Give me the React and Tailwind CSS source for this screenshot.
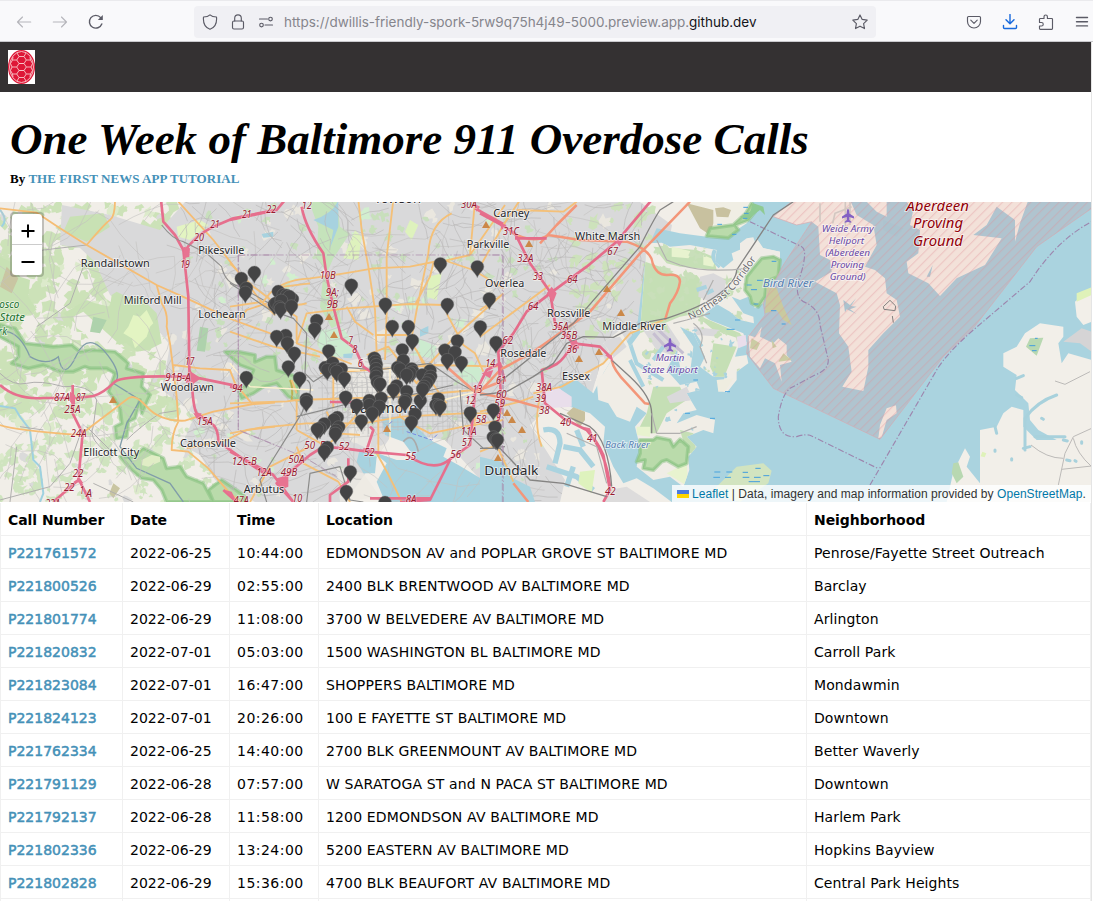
import React from "react";

const calls = [
  ["P221761572", "2022-06-25", "10:44:00", "EDMONDSON AV and POPLAR GROVE ST BALTIMORE MD", "Penrose/Fayette Street Outreach"],
  ["P221800526", "2022-06-29", "02:55:00", "2400 BLK BRENTWOOD AV BALTIMORE MD", "Barclay"],
  ["P221801774", "2022-06-29", "11:08:00", "3700 W BELVEDERE AV BALTIMORE MD", "Arlington"],
  ["P221820832", "2022-07-01", "05:03:00", "1500 WASHINGTON BL BALTIMORE MD", "Carroll Park"],
  ["P221823084", "2022-07-01", "16:47:00", "SHOPPERS BALTIMORE MD", "Mondawmin"],
  ["P221824123", "2022-07-01", "20:26:00", "100 E FAYETTE ST BALTIMORE MD", "Downtown"],
  ["P221762334", "2022-06-25", "14:40:00", "2700 BLK GREENMOUNT AV BALTIMORE MD", "Better Waverly"],
  ["P221791129", "2022-06-28", "07:57:00", "W SARATOGA ST and N PACA ST BALTIMORE MD", "Downtown"],
  ["P221792137", "2022-06-28", "11:58:00", "1200 EDMONDSON AV BALTIMORE MD", "Harlem Park"],
  ["P221802336", "2022-06-29", "13:24:00", "5200 EASTERN AV BALTIMORE MD", "Hopkins Bayview"],
  ["P221802828", "2022-06-29", "15:36:00", "4700 BLK BEAUFORT AV BALTIMORE MD", "Central Park Heights"],
  ["", "", "", "", ""],
];

// The map is drawn in sheets at triple scale; each starts at its own longitude offset.
const Sheet = ({ x, children, ...rest }) => (
  <g transform={`translate(${x} 200) scale(0.33333)`} {...rest}>{children}</g>
);

// Small repeatable generator for street and vegetation texture.
function seeded(seed) {
  let s = seed;
  return () => {
    s = (s * 16807) % 2147483647;
    return s / 2147483647;
  };
}

function scatter(seed, count, x0, y0, w, h, size) {
  const r = seeded(seed);
  let d = "";
  for (let i = 0; i < count; i++) {
    const cx = x0 + r() * w;
    const cy = y0 + r() * h;
    const s = size * (0.4 + r());
    const n = 11;
    for (let k = 0; k < n; k++) {
      const a = (k / n) * Math.PI * 2;
      const q = s * (0.3 + r() * 0.9);
      d += (k ? "L" : "M") + (cx + Math.cos(a) * q).toFixed(1) + "," + (cy + Math.sin(a) * q).toFixed(1);
    }
    d += "Z";
  }
  return d;
}

function streets(seed, count, x0, y0, w, h, len) {
  const r = seeded(seed);
  let d = "";
  for (let i = 0; i < count; i++) {
    let x = x0 + r() * w;
    let y = y0 + r() * h;
    let a = r() * Math.PI * 2;
    d += `M${x.toFixed(1)},${y.toFixed(1)}`;
    for (let k = 0; k < 4; k++) {
      a += (r() - 0.5) * 1.1;
      x += Math.cos(a) * len;
      y += Math.sin(a) * len;
      d += `L${x.toFixed(1)},${y.toFixed(1)}`;
    }
  }
  return d;
}

const grid = (() => {
  let d = "";
  for (let x = 322; x < 475; x += 5) d += `M${x},${372 + (x % 3) * 4}L${x + 1},${428 + (x % 4) * 3}`;
  for (let y = 368; y < 432; y += 5) d += `M${318 + (y % 4) * 6},${y}L${468 - (y % 3) * 5},${y - 2}`;
  return d;
})();

const URBAN = "M185,202 L560,202 L640,202 L672,225 L660,290 L640,330 L600,365 L590,400 L548,408 L530,425 L565,480 L560,502 L500,502 L445,440 L420,436 L395,430 L375,460 L345,502 L255,502 L215,480 L200,455 L182,445 L195,415 L162,390 L170,345 L150,320 L110,295 L95,262 L80,248 L60,245 L62,205 L110,215 L160,230Z M700,275 L728,275 L728,298 L705,298Z";
const EAST_WATER = "M500,150 L530,85 L600,100 L680,110 L760,90 L800,0 L1900,0 L1900,906 L575,906 L520,865 L470,835 L430,850 L400,800 L370,730 L375,680 L330,640 L270,620 L235,555 L290,540 L340,580 L370,520 L400,470 L470,390Z";
const EAST_LAND = "M500,130 L545,128 L570,140 L630,135 L710,150 L705,185 L730,205 L760,180 L755,160 L790,145 L800,118 L820,135 L830,115 L850,145 L900,155 L895,210 L875,235 L860,260 L850,310 L825,325 L805,290 L780,300 L755,290 L790,340 L820,350 L822,370 L780,360 L750,335 L710,312 L670,345 L690,360 L790,400 L800,430 L775,440 L765,470 L800,465 L805,490 L770,515 L770,540 L740,578 L720,570 L735,530 L700,530 L660,500 L675,470 L640,400 L600,380 L640,440 L630,520 L600,500 L590,450 L560,510 L600,555 L650,545 L660,570 L620,580 L650,630 L610,640 L590,670 L650,645 L705,660 L700,700 L670,690 L620,710 L650,740 L625,770 L628,810 L610,860 L570,830 L520,840 L470,800 L480,740 L465,680 L500,640 L470,620 L450,665 L410,650 L385,610 L355,600 L350,540 L370,520 L400,470 L370,430 L420,390 L450,440 L480,400Z";

const PINS = [
  [34,266],[73,248],[49,295],[46,308],[145,305],[160,315],[170,317],[187,328],[178,320],[133,344],[138,340],[154,332],[148,352],[152,357],[184,349],[364,286],[466,343],[631,222],[742,231],[778,327],[652,344],[751,411],[487,410],[535,410],[547,452],[260,392],[254,417],[167,437],[140,440],[172,460],[193,490],[175,531],[209,565],[49,563],[229,628],[229,636],[296,483],[286,533],[308,520],[292,540],[315,538],[334,537],[320,545],[343,565],[347,622],[433,505],[436,515],[439,525],[438,537],[440,550],[438,560],[442,577],[450,582],[517,480],[520,512],[503,533],[510,538],[545,537],[548,545],[540,550],[530,555],[500,588],[490,600],[530,605],[453,625],[418,632],[418,645],[448,650],[380,646],[427,670],[394,693],[527,630],[524,636],[571,632],[555,673],[544,697],[600,543],[577,555],[602,560],[597,570],[590,580],[582,590],[578,598],[625,627],[618,645],[626,647],[630,650],[682,453],[645,481],[675,487],[652,510],[694,518],[798,458],[721,669],[790,660],[795,712],[790,742],[798,748],[802,750],[322,683],[312,690],[283,702],[270,715],[262,718],[326,712],[318,722],[316,731],[292,773],[283,784],[361,846],[349,905],[465,938],
];

// text, center x, baseline y, drawn width, font size, kind
const LABELS = {
  0: [
    ["Randallstown",346,200,207,32,"t"],["Pikesville",664,162,138,32,"t"],["Milford Mill",458,313,174,32,"t"],["Lochearn",666,353,142,32,"t"],["Woodlawn",562,574,160,32,"t"],["Catonsville",624,741,168,32,"t"],["Ellicott City",334,768,168,32,"t"],
    ["osco",28,323,60,32,"g"],["State",37,364,75,32,"g"],["rk",8,406,26,32,"g"],
    ["21",645,83,28,29,"r"],["21",740,55,28,29,"r"],["20",597,123,30,29,"r"],["19",555,204,29,29,"r"],["17",569,494,28,29,"r"],["91B-A",534,544,76,29,"r"],["94",712,576,32,29,"r"],["87A",186,604,48,29,"r"],["87",242,602,28,29,"r"],["25A",217,639,49,29,"r"],["24A",236,710,47,29,"r"],["22",234,830,32,29,"r"],["22",208,873,32,29,"r"],["1",246,882,13,29,"r"],["A",267,892,18,29,"r"],["15A",614,675,47,29,"r"],["47A",724,912,45,29,"r"],["22A",158,920,45,29,"r"],
  ],
  230: [
    ["Towson",503,10,140,36,"t"],["Parkville",774,145,128,32,"t"],["Overlea",824,260,118,32,"t"],["Arbutus",102,880,122,32,"t"],["Baltimore",462,638,200,42,"t"],
    ["22",124,39,30,29,"r"],["12",230,26,30,29,"r"],["30A",717,24,48,29,"r"],["10B",293,238,48,29,"r"],["9A;",307,289,40,29,"r"],["9B",307,325,34,29,"r"],["7",362,432,13,29,"r"],["8",374,458,15,29,"r"],["6",391,502,15,29,"r"],["50",239,747,32,29,"r"],["F",276,747,15,29,"r"],["52",342,751,32,29,"r"],["52",418,767,32,29,"r"],["55",542,779,32,29,"r"],["56",677,773,32,29,"r"],["57",710,739,30,29,"r"],["11A",716,704,47,29,"r"],["58",753,670,32,29,"r"],["12",721,612,30,29,"r"],["13",742,578,30,29,"r"],["14",781,500,30,29,"r"],["50A",199,790,49,29,"r"],["49B",177,827,49,29,"r"],["12C-B",43,794,75,29,"r"],["12A",102,827,45,29,"r"],["10",202,907,30,29,"r"],["8A",543,908,32,29,"r"],
  ],
  480: [
    ["Carney",94,51,108,32,"t"],["White Marsh",383,119,196,32,"t"],["Rossville",266,352,130,32,"t"],["Middle River",462,389,190,32,"t"],["Rosedale",130,470,138,32,"t"],["Essex",288,539,84,32,"t"],["Dundalk",94,826,162,40,"t"],
    ["Martin",570,484,86,29,"p"],["State Airport",570,520,166,29,"p"],["Back River",442,743,134,29,"w"],
    ["31C",93,104,48,29,"r"],["32A",136,187,48,29,"r"],["33",174,241,30,29,"r"],["67",398,165,32,29,"r"],["64",277,250,32,29,"r"],["64",159,330,32,29,"r"],["35A",241,389,49,29,"r"],["35B",267,418,49,29,"r"],["36",276,459,32,29,"r"],["62",83,433,32,29,"r"],["61",63,553,30,29,"r"],["60",64,593,32,29,"r"],["59",59,622,32,29,"r"],["9",55,664,14,29,"r"],["38A",192,572,48,29,"r"],["39",182,606,32,29,"r"],["38",193,641,32,29,"r"],["40",257,679,32,29,"r"],["41",337,727,32,29,"r"],["42",391,885,32,29,"r"],
  ],
  740: [
    ["Aberdeen",593,32,188,42,"d"],["Proving",594,85,150,42,"d"],["Ground",594,139,150,42,"d"],
    ["Weide Army",323,97,156,29,"p"],["Heliport",319,132,106,29,"p"],["(Aberdeen",323,167,134,29,"p"],["Proving",322,204,100,29,"p"],["Ground)",323,239,108,29,"p"],["Bird River",144,261,152,32,"w"],
  ],
};
const INK = { t: "#29292d", g: "#21722f", r: "#981b32", p: "#6948a5", w: "#587fb2", d: "#920009" };

function Forest({ d }) {
  return (
    <g strokeLinejoin="round">
      <path d={d} fill="#badbab" stroke="#a3d096" strokeWidth="4" />
      <path d={d} fill="none" stroke="#7ebd79" strokeWidth="12" opacity=".45" />
    </g>
  );
}

function Map() {
  return (
    <svg className="block h-[300px] w-[1091px]" viewBox="0 202 1091 300">
      <defs>
        <clipPath id="urban"><path d={URBAN} /></clipPath>
        <clipPath id="west"><path d="M0,202H610L640,280L580,400L540,502H0Z" /></clipPath>
        <clipPath id="eastland"><path d={EAST_LAND} /></clipPath>
        <pattern id="range" width="20" height="20" patternUnits="userSpaceOnUse" patternTransform="rotate(45)">
          <path d="M2,0V20" stroke="#e08f98" strokeWidth="2.4" />
        </pattern>
        <path id="pin" d="M0,0C-1.2,-4-6.5,-6.9-6.5,-11A6.5,6.2 0 0 1 6.5,-11C6.5,-6.9 1.2,-4 0,0Z" />
      </defs>
      <rect x="0" y="202" width="1091" height="300" fill="#f1eee8" />
      <path d={scatter(91, 300, 0, 205, 185, 210, 8)} fill="#cce2b8" />
      <path d={scatter(38, 190, 0, 400, 230, 100, 5)} fill="#cfe4bf" />
      <path d={scatter(14, 60, 0, 205, 190, 300, 6)} fill="#dceacb" />
      <path d={scatter(24, 45, 0, 205, 190, 300, 4)} fill="#dadada" />
      <path d={URBAN} fill="#d9d9da" />
      <path d={scatter(47, 150, 190, 205, 370, 290, 4)} fill="#c8dfbc" clipPath="url(#urban)" />
      <path d={scatter(3, 130, 150, 205, 480, 290, 6)} fill="#eae7df" clipPath="url(#urban)" />
      <path d={scatter(29, 24, 200, 210, 360, 270, 6)} fill="#d2efcf" clipPath="url(#urban)" />
      <path d={scatter(77, 60, 570, 205, 90, 130, 6)} fill="#cde2bb" />

      <Sheet x={0}>
        <path d="M190,340 L225,320 L260,300 L285,310 L330,320 L335,285 L350,275 L380,290 L430,290 L445,315 L470,340 L485,430 L445,450 L410,455 L380,430 L330,435 L310,400 L230,395 L225,370Z M0,170 L40,190 L60,230 L90,240 L85,290 L110,330 L80,345 L60,370 L30,365 L0,380Z M210,50 L310,40 L330,80 L260,125 L190,95Z" fill="#c8e1b4" />
        <path d="M220,350L250,335 300,380 350,425 335,465 290,420 230,385Z" fill="#f1eee8" />
        <path d="M400,345 L420,350 440,330 L460,370 L450,380 440,410 L405,445 L395,415 370,400 385,380Z M530,80 L600,60 L625,75 L570,120 L535,110Z" fill="#e3f4c2" />
        <path d="M20,200 L55,235 L35,280 L0,260Z M340,850l20,15 -20,30 -12,-15Z" fill="#c9c5a2" />
        <Forest d="M0,375 L45,385 L75,430 L120,435 L160,440 L215,435 L240,455 L280,450 L345,455 L385,490 L380,505 L430,520 L425,560 L450,585 L425,640 L420,600 L405,655 L385,665 L380,710 L350,715 L345,680 L365,670 L360,625 L345,600 L325,575 L345,520 L320,505 L270,505 L255,500 L220,515 L180,515 L130,495 L85,505 L35,490 L55,470 L55,440 L0,410Z" />
        <Forest d="M360,770 L400,770 L430,745 L490,775 L500,805 L540,800 L560,830 L610,850 L640,906 L500,906 L485,870 L460,840 L425,835 L395,810Z M625,870 L665,840 L730,885 L740,906 L640,906Z" />
        <path d="M425,780l30,-15 25,5 0,15 -35,15 -20,-5Z" fill="#e0edc5" />
        <path d="M0,30 Q25,60 5,80 M0,618 L45,625 L60,650 L90,690 L100,780 L120,800 L130,880 L120,906" fill="none" stroke="#9ed1e0" strokeWidth="6" />
        <path d="M20,395 Q60,400 90,470 Q140,500 175,470 Q190,550 230,465 T340,490 Q365,535 340,550 L420,600 L380,670 L360,740 L410,805 L510,850 L550,906" fill="none" stroke="#819da9" strokeWidth="4" />
        <path d="M280,350l40,10 -20,40 -30,-5Z M600,380l25,5 -10,70 -25,-3Z" fill="#aed2ac" />
      </Sheet>
      <Sheet x={230}>
        <path d="M235,0 L320,0 L330,80 L360,100 L310,175 L290,220 L260,170 L265,80Z M280,225 L320,300 L335,370 L305,385 L270,320Z" fill="#c5e3bb" />
        <path d="M270,390 L340,385 L370,430 L360,470 L290,470 L265,440Z M555,410 L620,440 L610,475 L540,465 L570,440Z M680,525 L725,480 L755,510 L750,545 L700,550Z" fill="#ccebcf" />
        <path d="M375,90 L395,110 L385,180 L340,175Z M540,60 L565,75 L545,120 L525,95Z M595,230 L635,220 L620,300 L590,290Z" fill="#def2bd" />
        <Forest d="M-15,455 L25,455 L75,465 L75,485 L110,470 L135,470 L140,510 L200,530 L205,600 L175,590 L140,550 L100,560 L70,580 L35,595 L25,570 L50,555 L70,510 L30,495Z" />
        <path d="M180,540Q190,560 185,600" fill="none" stroke="#b9b052" strokeWidth="6" />
        <path d="M300,495 L410,470 L500,500 L510,590 L400,620 L310,590Z M370,650 L430,690 L420,750 L360,720Z M320,800L400,820L450,890L330,906Z" fill="#eceaE3" opacity=".75" />
        <path d="M455,650 L520,655 L560,680 L600,720 L650,745 L640,770 L685,795 L760,840 L800,906 L465,906 L440,845 L470,790 L430,755 L500,780 L560,780 L520,725 L465,705Z M390,745 L440,770 L435,820 L400,820 L380,785Z M570,390 L595,378 L595,400 L570,410Z M95,102 L130,95 L130,110 L100,113Z M250,60 Q310,40 325,0 L325,80 L300,145 L310,90Z M340,462 L370,460 L365,475 L340,473Z" fill="#a7d2df" />
      </Sheet>
      <path d={streets(61, 200, 0, 202, 600, 300, 17)} fill="none" stroke="#c2c1c0" strokeWidth=".6" clipPath="url(#west)" />
      <path d={streets(19, 380, 180, 202, 480, 300, 10)} fill="none" stroke="#b9b8b8" strokeWidth=".65" clipPath="url(#urban)" />
      <path d={grid} fill="none" stroke="#c0bfbf" strokeWidth=".6" />
      <Sheet x={0} fill="none">
        <path d="M0,520Q40,560 80,550T190,560M190,560Q270,550 290,600L280,680Q260,720 340,770M240,705L210,790 150,860 0,900M130,690L60,680M480,640Q420,680 380,720M480,640L530,632M280,850L400,906M50,740L30,906M260,680L340,760M90,160L130,150 260,135 M110,380L210,310 250,200" stroke="#b0afae" strokeWidth="3" />
      </Sheet>
      <Sheet x={480}>
        <path d={EAST_WATER} fill="#aad3df" />
        <path d="M620,0 L630,25 L640,55 L670,85 L685,112 L745,115 L770,90 L800,70 L825,40 L815,0Z" fill="#f0eee4" />
        <path d="M620,10 L700,30 L700,70 L690,105 L660,85Z M705,25 L730,22 L753,30 L745,52 L710,50Z" fill="#c8c19f" />
        <Forest d="M680,108 L745,114 L775,90 L765,75 L805,60 L825,35 L815,10 L798,40 L760,75 L690,85Z" />
        <path d={EAST_LAND} fill="#f0ede6" />
        <g clipPath="url(#eastland)">
          <path d="M480,180 L540,200 L600,230 L650,225 L670,250 L655,340 L600,350 L480,400Z M640,340L780,400L790,420L700,390Z M520,560 L600,560 L620,600 L560,640 L530,700 L470,700 L500,640Z M520,140 L650,150 L700,170 L710,210 L600,200 L560,190Z M600,690L640,700 650,760 620,760Z M700,430 L770,440 L720,560 L690,500Z" fill="#c5dfb5" />
          <path d="M575,140 L640,155 L625,175 L575,170Z M670,165 L705,180 L700,200 L670,195Z M470,680L510,680 510,710 470,705Z M560,820L620,790 625,860Z" fill="#e8f3cf" />
          <path d="M660,230 L700,220 L740,240 L730,280 L690,305 L655,290Z M475,370 L560,370 L600,430 L590,470 L530,450Z M640,380 L720,390 L720,410 L650,405Z M370,420 L420,410 L440,440 L380,490Z M560,590L620,560 640,600 570,610Z" fill="#dad9db" />
          <path d={scatter(82, 70, 500, 130, 310, 420, 12)} fill="#c9dfba" />
          <path d={scatter(55, 32, 500, 390, 270, 300, 8)} fill="#aad3df" />
          <path d="M705,150Q690,175 720,200 M640,400L665,440M550,440L520,480M450,480L490,560 M440,400L470,490L550,540 M650,270l30,-10 M680,280l20,-10" fill="none" stroke="#aad3df" strokeWidth="12" />
        </g>
        <path d="M0,770 L80,790 L90,830 L150,860 L165,906 L0,906Z" fill="#aad3df" />
        <path d="M190,690 Q240,680 240,730 L225,790 M250,740L300,750 340,800M200,800L290,830 340,870M290,690L310,740M280,800L260,860" fill="none" stroke="#aad3df" strokeWidth="16" />
        <path d="M385,870L440,860 510,906H370Z" fill="#dddcdc" />
        <Forest d="M480,720 L520,720 L530,712 L570,720 L580,740 L600,718 L625,740 L620,790 L595,800 L560,780 L545,785 L520,810 L490,805 L495,780 L470,785 L480,760Z" />
        <path d="M180,585 L230,560 L275,590 L275,620 L195,625Z M770,410 L797,405 L800,435 L775,445Z" fill="#e9deeb" />
        <path d="M260,640 L280,622 L315,635 L315,660 L300,680Z" fill="#c8c19f" />
        <path d="M530,385 L610,460 M520,400 L565,450" stroke="#c6bfd1" strokeWidth="9" />
        <path d="M300,815 L345,810 L335,880 L295,850Z" fill="#def2bd" />
        <path d="M690,880 L770,800 L850,790 L875,812 L865,850 L780,906Z" fill="#d2e4c0" />
        <path d="M710,540 L760,535 L735,575 L715,575Z" fill="#efede0" />
      </Sheet>
      <Sheet x={740}>
        <path d="M0,130 L20,115 L40,112 L50,140 L120,155 L120,180 L65,175 L60,210 L0,220Z" fill="#efece6" />
        <Forest d="M65,175 L100,170 L120,180 L115,230 L80,245 L75,290 L55,320 L35,310 L30,290 L15,270 L20,230 L40,205Z" />
        <path d="M0,50 L30,35 L40,10 L70,20 L75,45 L60,30 L20,60Z" fill="#8fca92" />
        <path d="M100,50 L170,75 L215,65 L130,195 L70,310 L75,345 L25,410 L20,460 L100,565 L420,718 L610,470 L700,385 L890,140 L1055,25 L1055,0 L160,0Z" fill="#b0c4cf" />
        <path d="M80,260 L110,265 L130,320 L155,375 L130,360 L110,330 L75,340Z" fill="#c9ca9f" />
        <g fill="#f3e1d9">
          <path d="M100,50 L160,0 L330,0 L350,45 L400,75 L410,135 L375,200 L405,210 L435,235 L440,280 L470,300 L480,350 L430,400 L385,450 L385,500 L370,573 L307,560 L335,515 L325,440 L297,400 L300,315 L290,280 L225,245 L275,215 L270,180 L240,165 L235,80 L215,65 L170,75Z" />
          <path d="M375,0 L440,0 L440,50 L410,35Z M495,0 L865,0 L840,70 L825,125 L825,60 L770,20 L740,75 L700,105 L785,115 L735,195 L650,235 L600,288 L565,250 L505,220 L500,185 L535,160 L540,90 L510,75 L520,30Z" />
          <path d="M440,625 L468,616 L470,640 L440,660 L425,712 L415,715 L420,675Z M25,405 L45,412 L65,380 L60,410 L100,430 L115,415 L140,435 L140,465 L155,485 L120,495 L125,545 L105,490 L75,475 L60,505 L30,470Z" />
        </g>
        <path d="M310,300 L330,315 L348,295 L333,318 L350,320 L330,328 L350,342 L320,328 L315,337Z M560,230 L578,195 L570,230Z M430,60 L490,85 L470,110 L430,90Z" fill="#acc3ce" />
        <path d="M35,415 L60,430 L50,450 L30,445Z M95,420 L110,440 L98,445Z M130,460 L155,480 L115,485Z" fill="#cbcda4" />
        <path d="M100,50 L170,75 L215,65 L130,195 L70,310 L75,345 L25,410 L20,460 L100,565 L420,718 L610,470 L700,385 L890,140 L1055,25 L1055,0 L160,0Z" fill="url(#range)" fillOpacity=".5" stroke="#d5a9b1" strokeWidth="2" />
        <path d="M1055,263 L1005,305 L1010,350 L1030,375 L1055,365Z M900,370 L970,380 L970,410 L955,430 L965,490 L985,460 L1055,480 L1055,906 L620,906 L640,815 L675,745 L690,770 L680,800 L720,850 L720,690 L770,680 L790,640 L815,620 L850,630 L850,680 L890,720 L950,720 L895,690 L870,660 L865,610 L825,570 L830,525 L790,500 L790,460 L830,440 L855,400Z" fill="#f2efe9" />
        <path d="M870,415 L910,413 L890,467 L858,440Z M640,790 L655,787 L670,830 L650,850 L635,820Z" fill="#b8d8b1" />
        <path d="M1010,280 L1055,262 L1055,285 L1010,305Z M727,755l12,5 -5,12 -12,-3Z" fill="#dff2b9" />
        <path d="M970,425 L1025,385 L1055,395 L1055,455 L1020,430Z" fill="#d5d4d5" />
        <path d="M855,750 L855,655 Q890,605 950,585 M885,710 L975,710 M830,535l20,-8 M830,585l15,8 M765,680l5,20 M850,745l20,-5 M905,655l5,3 M815,776v4 M765,750v4 M980,780l10,2 M1005,782l3,2 M970,720l12,3 M1025,725v5" fill="none" stroke="#a8d1dc" strokeWidth="9" strokeLinecap="round" />
        <path d="M945,543 L975,553 L1050,515 M873,735 Q920,775 970,775 M955,855 L975,760 L1000,710 L1055,685 M1000,715 Q1010,760 1055,800 M965,808L1055,798" fill="none" stroke="#bcbab8" strokeWidth="3" />
        <path d="M30,65 L185,140 Q205,150 180,230 Q160,285 190,305 Q240,325 240,375 L265,480 Q265,510 225,525 L150,565 Q125,585 115,650 Q115,715 170,710 Q200,700 215,708 L415,806 M390,855 L590,510 Q620,460 700,390 L870,245 Q950,120 1055,65" fill="none" stroke="#9d86ae" strokeWidth="3.500" strokeDasharray="18 6 4 6" />
        <path d="M430,320 L450,301 L467,318 L465,332 L432,328Z M457,348 L460,368" fill="none" stroke="#817e7d" strokeWidth="3" />
        <path d="M240,10V65 M278,70 L285,40 L335,20 M316,80V5 M330,75V0" fill="none" stroke="#d2c7c1" strokeWidth="5" />
        <path d="M8,832h20m14,0h20m-54,-15h16m22,-12h16m-20,40h18m-34,0h16m28,-18h18 M868,437h18m-10,15h14m-5,-37h8 M10,22h14m-12,18h14 M95,184h14m-58,57h17m-35,28h18m-10,43h14m38,20h16m16,40h12" fill="none" stroke="#429dde" strokeWidth="3" />
      </Sheet>

      <Sheet x={0} fill="none" strokeLinejoin="round">
        <g stroke="#f5bd74" strokeWidth="5.5">
          <path d="M0,25 L110,38 L180,85 L260,135 L470,255 L560,295 L700,360 L825,405 M345,0 Q345,50 330,60 T260,135 M470,255 L485,310 Q505,340 500,380 L510,430 L530,590 L535,665 Q515,700 515,750 L565,755 L625,805 L685,875 L720,906 M520,495 L600,505 L690,510 L705,550 L755,610 M0,675 Q40,690 240,705 L385,595 Q405,580 440,620 Q480,665 555,662 L640,635 L760,612 L825,608 M535,5 L640,120 L710,210 L780,300 L825,345 M560,745 L680,720 L740,690 L825,680 M715,365 L740,330 L800,310" />
        </g>
        <path d="M483,0 L490,65 L525,105 L550,150 L565,290 L568,510 L575,530 Q578,620 590,640 L640,675 Q655,690 655,725 L740,785 L800,825 M550,160 Q580,110 640,80 L700,55 L825,30 M0,555 Q50,600 130,594 L230,594 L280,588 Q310,580 345,545 Q370,525 560,530 L600,535 L720,560 M218,555 L218,640 L248,700 L235,840 L160,906 M240,845 L270,906 M670,870 L710,906" stroke="#e66f8d" strokeWidth="8" />
        <path d="M485,75 Q520,120 550,125 L620,160 L665,200 Q675,250 720,260 L825,320" stroke="#91908f" strokeWidth="3.500" />
        <path d="M715,165 V690 L825,735 M715,165H825" stroke="#b49bb4" strokeWidth="4" strokeDasharray="20 6 4 6" opacity=".7" />
        <path d="M550,140 l20,5 -2,25 -15,5Z M565,510 l38,25 -25,18 -20,-5Z M210,575l15,10 0,35 -15,-15Z M220,845l20,-10 10,15Z M675,870l20,5 15,31Z M580,640l25,0 -12,20Z" fill="#e77391" stroke="none" />
      </Sheet>
      <Sheet x={230} fill="none" strokeLinejoin="round">
        <path d="M0,320 L100,305 Q140,240 240,235 Q320,225 430,205 L540,200 L640,180 L730,210 L820,265 M385,0 L395,90 L415,200 L435,330 L440,460 M490,0 L470,170 L470,340 L465,480 M665,40 Q600,70 595,160 L560,330 L540,440 M720,165 L610,190 L600,230 L555,315 M720,165 L825,15 M0,190 L70,260 L130,305 L200,350 L200,430 L365,492 M200,430L230,340L350,325 L540,312 L640,315 M735,5 L720,165 M350,320 L375,365 L430,405 M435,405 L530,405 L590,500 L680,405 L820,280 M640,315 L655,350 L700,435 L735,460 L760,515 M410,465 L475,440 L560,550 L610,480 M500,480 L510,650 M560,450L600,540L650,610 M0,395 L130,440 L270,470 M0,610 L170,604 L200,600 L510,590 L735,570 M270,520 L620,495 L820,500 M310,500 L310,625 M200,600V690 M0,700 L90,683 L230,670 L400,670 L515,650 L700,640 L820,640 M445,495V770 M540,560V680 M185,540 L200,580 M200,690 L290,740 L380,645 M440,760 Q475,820 515,906 M510,650 L540,670 L600,700 L700,680 L820,660 M290,635 L320,700 L390,705 M240,740 L120,800 L60,906 M200,740L220,790L325,845L360,906 M230,310 Q150,330 160,260 L240,250 M735,635 L735,680" stroke="#f4c078" strokeWidth="5.5" />
        <path d="M640,600 L760,570 M0,490 L60,560 L250,570 M310,510H390 M480,500V720" stroke="#fff2cf" strokeWidth="4" />
        <path d="M230,540 Q245,545 240,580 L215,640 L90,840 L110,906 M0,250 L120,330 L190,355 L230,400 L225,520 L250,545 L320,500 L440,510 L600,490 L680,545 L735,575 M690,570 L700,690 L760,745 L825,740 M230,906 L240,820 L330,800 L360,900 L400,906 M200,650 L400,600 L520,590 L670,555" stroke="#8b8b8a" strokeWidth="3.500" />
        <path d="M215,20 Q225,80 280,160 L290,230 L310,320 L335,415 L375,445 L400,500 L430,520 M0,60 L140,30 L165,0 M735,25 L825,75 M0,560 L25,565 M0,755 L130,825 L190,906 L140,850 L240,765 L280,740 L340,745 L415,755 L530,765 Q605,815 650,785 L720,735 L735,580 L770,510 L810,490 L825,545 M420,680 L430,690 L410,750 M300,606H390 M355,775V845 L300,885 V906 M660,780 L600,900 L510,906 M420,895H600" stroke="#e66f8d" strokeWidth="8" />
        <path d="M735,575 L825,540 M650,500 L735,575" stroke="#f39a80" strokeWidth="8" />
        <path d="M25,165 H820 V906 M25,165 V690 L220,770 L320,830" stroke="#a887a9" strokeWidth="3" strokeDasharray="22 6 4 6" opacity=".65" />
        <path d="M465,685 L490,660 M530,695 L605,720 L625,700" stroke="#7887df" strokeWidth="3" strokeDasharray="12 6" />
        <path d="M520,725 Q550,690 565,755" stroke="#aaa" strokeWidth="5" />
        <path d="M140,835 l35,-10 0,35 -25,10Z M730,10l20,10 -10,15Z M755,520l35,-10 -10,25Z M400,745h25v12h-25Z" fill="#e77391" stroke="none" />
      </Sheet>
      <Sheet x={480} fill="none" strokeLinejoin="round">
        <path d="M0,200L70,75L120,0 M110,30 L250,35 L290,5 M0,410L210,255 M0,330L60,290 M160,580 L245,560 L370,490 L450,400 L550,360 M0,635L120,605L160,590 M180,590 Q160,670 185,740 M0,755L50,735L100,845" stroke="#f4c078" strokeWidth="5.5" />
        <path d="M90,95 Q160,135 205,105 L300,120 L440,125 Q515,150 518,190 Q530,225 560,225 Q600,220 600,245 Q595,280 570,310 L555,360 M630,5 L480,160 L330,335 L160,455 L60,510 L0,575 M180,130L230,75L290,15 M395,480 Q400,510 440,550 L495,610 L508,612 M0,580 L100,600 L190,625 M100,850 L145,906" stroke="#f39679" strokeWidth="7.5" />
        <path d="M0,40 L65,75 L105,100 L150,190 L210,275 L225,370 L280,430 L360,440 L390,470 M200,115H105 M515,0 L410,125 L320,200 L210,280 L140,335 L100,400 L55,455 L60,545 L65,610 L50,680 M280,430 Q250,480 230,492 T185,510 L195,610 L250,655 L320,690 Q350,720 370,765 L390,870 L370,906 M320,690 Q380,760 390,860" stroke="#e56c8a" strokeWidth="8" />
        <path d="M0,585 L80,575 L160,530 L220,490 L260,430 L310,410 L400,412 L480,370 L560,355 Q670,320 720,280 T770,210 L880,45 L940,5 M60,545L280,370L480,140 Q520,60 540,30 L580,5 M240,640L330,680Q385,720 395,860 M395,480L450,530 Q515,590 515,640 V700 M0,745H60L150,840L250,850L380,890" stroke="#858483" strokeWidth="4" />
        <path d="M530,120L560,180 600,195 Q680,220 800,205 M580,370L620,360 690,340 M700,240L670,300 M640,370Q680,400 660,440L680,490 M530,700 H600L650,680 M515,640L530,700 M260,700L350,740 380,850" stroke="#b1b0af" strokeWidth="3.500" />
        <path d="M67,165 V906 M0,165H67" stroke="#a887a9" strokeWidth="3" strokeDasharray="22 6 4 6" opacity=".7" />
        <path d="M200,280l15,-20 15,20 -10,25Z M405,120l25,0 -12,20Z M270,425l20,-5 8,25 -20,5Z M60,70l20,5 -15,15Z M375,465l20,0 5,20Z M310,680l20,5 10,25Z" fill="#e77391" stroke="none" />
        <path d="M712,73h14m30,30h13m20,-48h13 M740,388h24 M765,360h16 M800,255h15 M735,575h15m-60,80h15m-90,-15h15 M700,832h20m15,0h18m-50,-16h18m18,0h18 M640,540h14" stroke="#49a4df" strokeWidth="3" />
      </Sheet>

      <g fill="#cb8848">
        {[[113,400],[486,225],[329,317],[334,335],[387,429],[498,458],[607,289],[621,313],[529,244],[579,359],[599,352],[507,413],[512,420],[522,430]].map(([x, y]) => (
          <path key={`${x}-${y}`} d={`M${x},${y - 4}l4,7h-8Z`} />
        ))}
      </g>
      <g fill="#8461c4">
        {[[670, 344], [848, 215]].map(([x, y]) => (
          <path key={x} d={`M${x},${y - 6}q1.3,0 1.3,3v1.5l4.7,3v2l-4.7,-1.5v3l2,1.8v1l-3.3,-.8-3.3,.8v-1l2,-1.8v-3l-4.7,1.5v-2l4.7,-3v-1.5q0,-3 1.3,-3Z`} />
        ))}
      </g>
      {Object.entries(LABELS).map(([x, items]) => (
        <Sheet key={x} x={Number(x)}>
          {items.map(([text, cx, y, width, size, kind], i) => (
            <text key={i} x={cx} y={y} textAnchor="middle" textLength={width} lengthAdjust="spacingAndGlyphs" fontFamily="Noto Sans, sans-serif" fontSize={kind === "r" ? 31.5 : size} fontStyle={kind === "t" ? "normal" : "italic"} fill={INK[kind]} stroke="#fff" strokeOpacity={kind === "r" ? 0.45 : 0.65} strokeWidth="5" style={{ paintOrder: "stroke" }}>{text}</text>
          ))}
        </Sheet>
      ))}
      <path id="corridor" d="M690,320 Q726,302 740,282 L758,257" fill="none" />
      <text fontFamily="Noto Sans, sans-serif" fontSize="10.2" fill="#6c6b6e" stroke="#fff" strokeOpacity=".6" strokeWidth="1.5" style={{ paintOrder: "stroke" }}><textPath href="#corridor">Northeast Corridor</textPath></text>
      <g fill="#444445" stroke="#777" strokeWidth=".45">
        {PINS.map(([x, y], i) => <use key={i} href="#pin" x={230 + x / 3} y={200.6 + y / 3} />)}
      </g>
    </svg>
  );
}

function Turtle() {
  return (
    <svg viewBox="0 0 27 34" className="h-[34px] w-[27px] bg-white">
      <ellipse cx="13.5" cy="17" rx="13.5" ry="17" fill="#de1737" />
      <g fill="none" stroke="#f8c6c9" strokeWidth=".9">
        <ellipse cx="13.5" cy="17" rx="12" ry="15.5" />
        <path d="M11,6.5h5l2.3,3.5-2.3,3.5h-5L8.700,10Z M11,13.500h5l2.300,3.500-2.300,3.500h-5L8.700,17Z M11,20.500h5l2.300,3.500-2.300,3.500h-5L8.700,24Z M8.700,10H4.500L2.500,13.500 4,17 2.500,20.500 4.500,24H8.700 M4,17H8.700 M18.300,10h4.200l2,3.500L23,17l1.500,3.500-2,3.500h-4.200 M23,17h-4.700 M11,6.500 9,3 M16,6.500 18,3 M11,27.500 9,31 M16,27.500 18,31 M4.500,10 5,7 M22.500,10 22,7 M4.500,24 5,27 M22.500,24 22,27" />
      </g>
    </svg>
  );
}

const Icon = ({ className, children }) => (
  <svg viewBox="0 0 16 16" className={`h-4 w-4 shrink-0 ${className}`} fill="none" stroke="currentColor" strokeWidth="1.15" strokeLinecap="round" strokeLinejoin="round">{children}</svg>
);

function Toolbar() {
  return (
    <div className="flex h-[42px] items-center border-t border-b border-t-[#eaeaed] border-b-[#c9c9cd] bg-[#f9f9fb] pt-px pl-4 text-[#5b5b66]">
      <Icon className="text-[#b6b6bb]"><path d="M14.700,8H1.500M6.500,3 1.500,8l5,5" /></Icon>
      <Icon className="ml-5 text-[#b6b6bb]"><path d="M1.300,8H14.500M9.500,3l5,5-5,5" /></Icon>
      <Icon className="ml-5"><path strokeWidth="1.400" d="M13.800,10A6.400,6.400 0 1 1 12.700,3.600" /><path d="M14.800,1v5H9.800Z" fill="currentColor" stroke="none" /></Icon>
      <div className="ml-[90px] flex h-8 w-[682px] items-center rounded bg-[#f0f0f4] pr-2 pl-2">
        <Icon><path d="M8,.8C6.500,2.300 4,3 1.500,3 1,8.500 2.500,13.500 8,15.300 13.500,13.500 15,8.500 14.500,3 12,3 9.500,2.300 8,.8Z" /></Icon>
        <Icon className="ml-3"><rect x="2.500" y="7" width="11" height="8" rx="1.500" /><path d="M4.700,7V4.200a3.300,3.300 0 0 1 6.600,0V7" /></Icon>
        <Icon className="ml-3"><path d="M1.500,5h8M7,11h7.500" /><circle cx="12.500" cy="5" r="1.800" /><circle cx="3.500" cy="11" r="1.800" /></Icon>
        <div className="flex-1 pt-px pl-2.5 font-['Inter',sans-serif] text-[13.5px] leading-4 tracking-[-0.012px] whitespace-nowrap text-[#85858c]"><span>https://dwillis-friendly-spork-5rw9q75h4j49-5000.preview.app.</span><span className="text-[#15141a]">github.dev</span></div>
        <Icon><path d="M8,.9l2.200,4.500 5,.7-3.600,3.500.9,5L8,12.200 3.500,14.600l.9-5L.8,6.100l5-.7Z" /></Icon>
      </div>
      <Icon className="ml-[90px]"><path d="M2.500,2.500h11a1,1 0 0 1 1,1V7.500a6.500,6.500 0 0 1-13,0V3.500a1,1 0 0 1 1-1ZM4.800,6.200 8,9.300l3.200-3.100" /></Icon>
      <Icon className="ml-5 text-[#1769dc]"><path strokeWidth="1.400" d="M8,.5V9.500M4,5.700 8,9.800 12,5.700M1.500,11.500v2a1,1 0 0 0 1,1h11a1,1 0 0 0 1-1v-2" /></Icon>
      <Icon className="ml-5"><path d="M2.300,4.500H6V2.700a1.700,1.700 0 0 1 3.400,0V4.500h4.300a.8,.8 0 0 1 .8,.8V14.500a.8,.8 0 0 1-.8,.8H2.300a.8,.8 0 0 1-.8-.8V12H3.500a1.700,1.700 0 0 0 0-3.500H1.500V5.300a.8,.8 0 0 1 .8-.8Z" /></Icon>
      <Icon className="ml-5"><path d="M2.500,3.500h11M2.500,7.700h11M2.500,11.900h11" strokeWidth="1.400" /></Icon>
    </div>
  );
}

const cell = "h-[33px] border-b border-l border-[#f0f0f0] pt-[2px] pr-0 pb-0 pl-[7px] text-left leading-[30px] whitespace-nowrap";

export default function App() {
  return (
    <main className="h-[901px] w-[1093px] overflow-hidden bg-white">
      <Toolbar />
      <div className="w-[1092px] border-r border-[#e5e5e5]">
        <nav className="flex h-[50px] items-center bg-[#343132] pl-2"><Turtle /></nav>
        <header className="h-[110px] pt-[19px] pl-[10px] font-['Liberation_Serif',serif] text-black">
          <h1 className="h-[56px] text-[45px] leading-[56px] font-bold tracking-[0.01px] whitespace-nowrap italic">One Week of Baltimore 911 Overdose Calls</h1>
          <p className="pt-[4px] text-[13px] leading-4 font-bold tracking-[0.06px]">By <a className="text-[#4591b8]">THE FIRST NEWS APP TUTORIAL</a></p>
        </header>
        <section className="relative h-[300px] w-[1091px] overflow-hidden">
          <Map />
          <div className="absolute top-[10px] left-[10px] w-[34px] rounded border-2 border-black/20 bg-clip-padding">
            <button className="flex h-[31px] w-[30px] items-center justify-center rounded-t-sm border-b border-[#ccc] bg-white"><svg viewBox="0 0 30 30" className="h-[30px] w-[30px]"><path d="M9.500,17h13M16,10.500v13" stroke="#000" strokeWidth="2" /></svg></button>
            <button className="flex h-[30px] w-[30px] items-center justify-center rounded-b-sm bg-white"><svg viewBox="0 0 30 30" className="h-[30px] w-[30px]"><path d="M9.500,17h13" stroke="#000" strokeWidth="2" /></svg></button>
          </div>
          <div className="absolute right-0 bottom-0 flex h-[17px] w-[419px] items-center bg-white/80 pt-px pl-[5px] font-['Liberation_Sans',sans-serif] text-[12px] leading-[17px] tracking-[0.055px] whitespace-nowrap text-[#333]">
            <svg viewBox="0 0 12 8" className="mr-[3px] h-2 w-3"><path d="M0,0h12v4H0Z" fill="#4C7BE1" /><path d="M0,4h12v4H0Z" fill="#FFD500" /></svg>
            <span><a className="text-[#0078a8]">Leaflet</a> | Data, imagery and map information provided by <a className="text-[#0078a8]">OpenStreetMap</a>.</span>
          </div>
        </section>
        <table className="mt-px w-[1091px] table-fixed border-separate border-spacing-0 border-r border-[#f0f0f0] font-['DejaVu_Sans',sans-serif] text-[14px] text-black">
          <colgroup><col className="w-[122px]" /><col className="w-[107px]" /><col className="w-[89px]" /><col className="w-[488px]" /><col /></colgroup>
          <thead><tr>{["Call Number", "Date", "Time", "Location", "Neighborhood"].map((h) => <th key={h} className={`${cell} font-bold tracking-[-0.05px]`}>{h}</th>)}</tr></thead>
          <tbody>
            {calls.map(([id, date, time, location, hood], i) => (
              <tr key={i}>
                <td className={cell}><a className="text-[#4591b8] [-webkit-text-stroke:0.5px_#4591b8]">{id}</a></td>
                <td className={`${cell} tracking-[0.03px]`}>{date}</td>
                <td className={`${cell} tracking-[0.48px]`}>{time}</td>
                <td className={`${cell} tracking-[0.145px]`}>{location}</td>
                <td className={`${cell} tracking-[0.09px]`}>{hood}</td>
              </tr>
            ))}
          </tbody>
        </table>
      </div>
    </main>
  );
}
